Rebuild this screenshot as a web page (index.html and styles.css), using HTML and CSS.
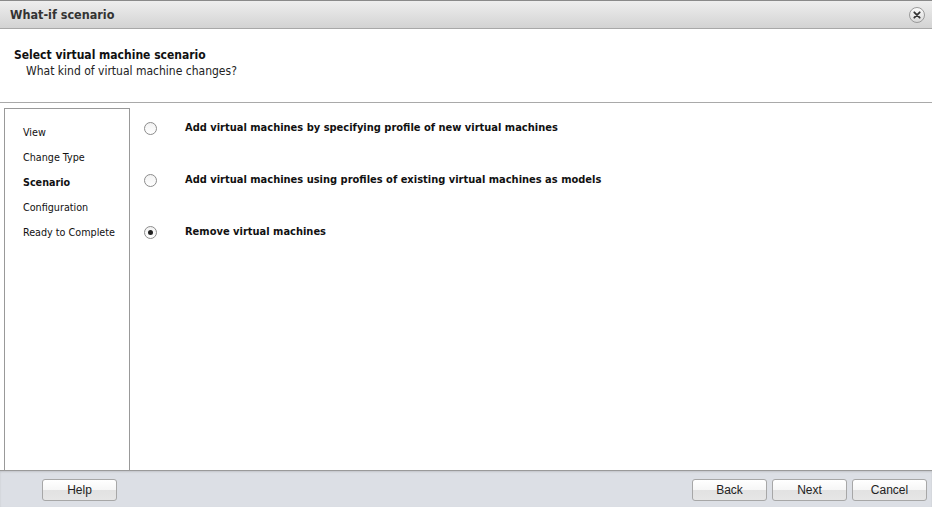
FILE: index.html
```html
<!DOCTYPE html>
<html>
<head>
<meta charset="utf-8">
<link rel="stylesheet" href="styles.css">
</head>
<body>
<div class="dialog">
  <div class="titlebar">
    <span class="title">What-if scenario</span>
    <span class="close"><svg width="18" height="18" viewBox="0 0 18 18"><defs><linearGradient id="cg" x1="0" y1="0" x2="0" y2="1"><stop offset="0" stop-color="#fdfdfd"/><stop offset="1" stop-color="#d8d8d8"/></linearGradient></defs><circle cx="9" cy="9" r="7.5" fill="url(#cg)" stroke="#9a9a9a" stroke-width="1"/><path d="M6.3 6.3 L11.7 11.7 M11.7 6.3 L6.3 11.7" stroke="#333" stroke-width="1.8" stroke-linecap="round"/></svg></span>
  </div>
  <div class="header">
    <div class="h-title">Select virtual machine scenario</div>
    <div class="h-sub">What kind of virtual machine changes?</div>
  </div>
  <div class="body">
    <nav class="steps">
      <div class="step">View</div>
      <div class="step">Change Type</div>
      <div class="step current">Scenario</div>
      <div class="step">Configuration</div>
      <div class="step">Ready to Complete</div>
    </nav>
    <div class="options">
      <label class="option"><span class="radio"></span><span class="opt-label">Add virtual machines by specifying profile of new virtual machines</span></label>
      <label class="option"><span class="radio"></span><span class="opt-label">Add virtual machines using profiles of existing virtual machines as models</span></label>
      <label class="option"><span class="radio checked"></span><span class="opt-label">Remove virtual machines</span></label>
    </div>
  </div>
  <div class="footer">
    <button class="btn help">Help</button>
    <div class="right">
      <button class="btn">Back</button>
      <button class="btn">Next</button>
      <button class="btn">Cancel</button>
    </div>
  </div>
</div>
</body>
</html>
```
FILE: styles.css
```css
* { box-sizing: border-box; }
html, body { margin: 0; padding: 0; background: #fff; }
body { font-family: "DejaVu Sans Condensed", "DejaVu Sans", sans-serif; font-stretch: condensed; color: #000; }
.dialog { width: 932px; height: 507px; display: flex; flex-direction: column; }
.titlebar {
  height: 29px; flex: none;
  border-top: 1px solid #8a8a8a;
  border-bottom: 1px solid #a8a8a8;
  background: linear-gradient(#eeeeee, #d3d3d3);
  display: flex; align-items: center; justify-content: space-between;
  padding: 0 6px 0 10px;
}
.title { font-weight: bold; font-size: 12.5px; color: #333; }
.close { display: flex; width: 18px; height: 18px; }
.header { height: 74px; flex: none; padding: 19px 0 0 14px; border-bottom: 1px solid #a9a9a9; }
.h-title { font-weight: bold; font-size: 12px; color: #111; line-height: 14px; }
.h-sub { font-size: 12px; color: #222; margin-left: 12px; line-height: 18px; }
.body { flex: 1; display: flex; padding: 5px 0 0 4px; }
.steps {
  width: 126px; flex: none;
  border-top: 1px solid #999; border-left: 1px solid #999; border-right: 1px solid #999;
  padding: 17px 0 0 18px;
  display: flex; flex-direction: column;
}
.step { font-size: 10.7px; height: 25px; line-height: 14px; color: #111; }
.step.current { font-weight: bold; }
.options { padding: 12px 0 0 14px; display: flex; flex-direction: column; }
.option { display: flex; height: 52px; align-items: flex-start; }
.radio {
  width: 13px; height: 13px; border-radius: 50%; border: 1px solid #8c8c8c;
  background: linear-gradient(#f2f2f2, #ffffff);
  margin-top: 2px; flex: none; position: relative;
}
.radio.checked::after {
  content: ""; position: absolute; left: 3px; top: 3px; width: 5px; height: 5px; border-radius: 50%; background: #222;
}
.opt-label { margin-left: 28px; margin-top: 1px; font-weight: bold; font-size: 11px; line-height: 14px; color: #111; }
.footer {
  height: 37px; flex: none;
  background: #dcdfe5;
  border-top: 1px solid #9a9a9a;
  box-shadow: inset 0 1px 2px rgba(0,0,0,0.12);
  display: flex; align-items: flex-start; justify-content: space-between;
  padding: 8px 5px 0 42px;
}
.right { display: flex; gap: 5px; }
.btn {
  width: 75px; height: 22px;
  font-family: "Liberation Sans", Arial, sans-serif; font-size: 12px; color: #222;
  border: 1px solid #a7a7a7; border-radius: 3px;
  background: linear-gradient(#ffffff 0%, #f6f6f6 50%, #e2e2e2 51%, #e6e6e6 100%);
  padding: 0; margin: 0;
}
```
